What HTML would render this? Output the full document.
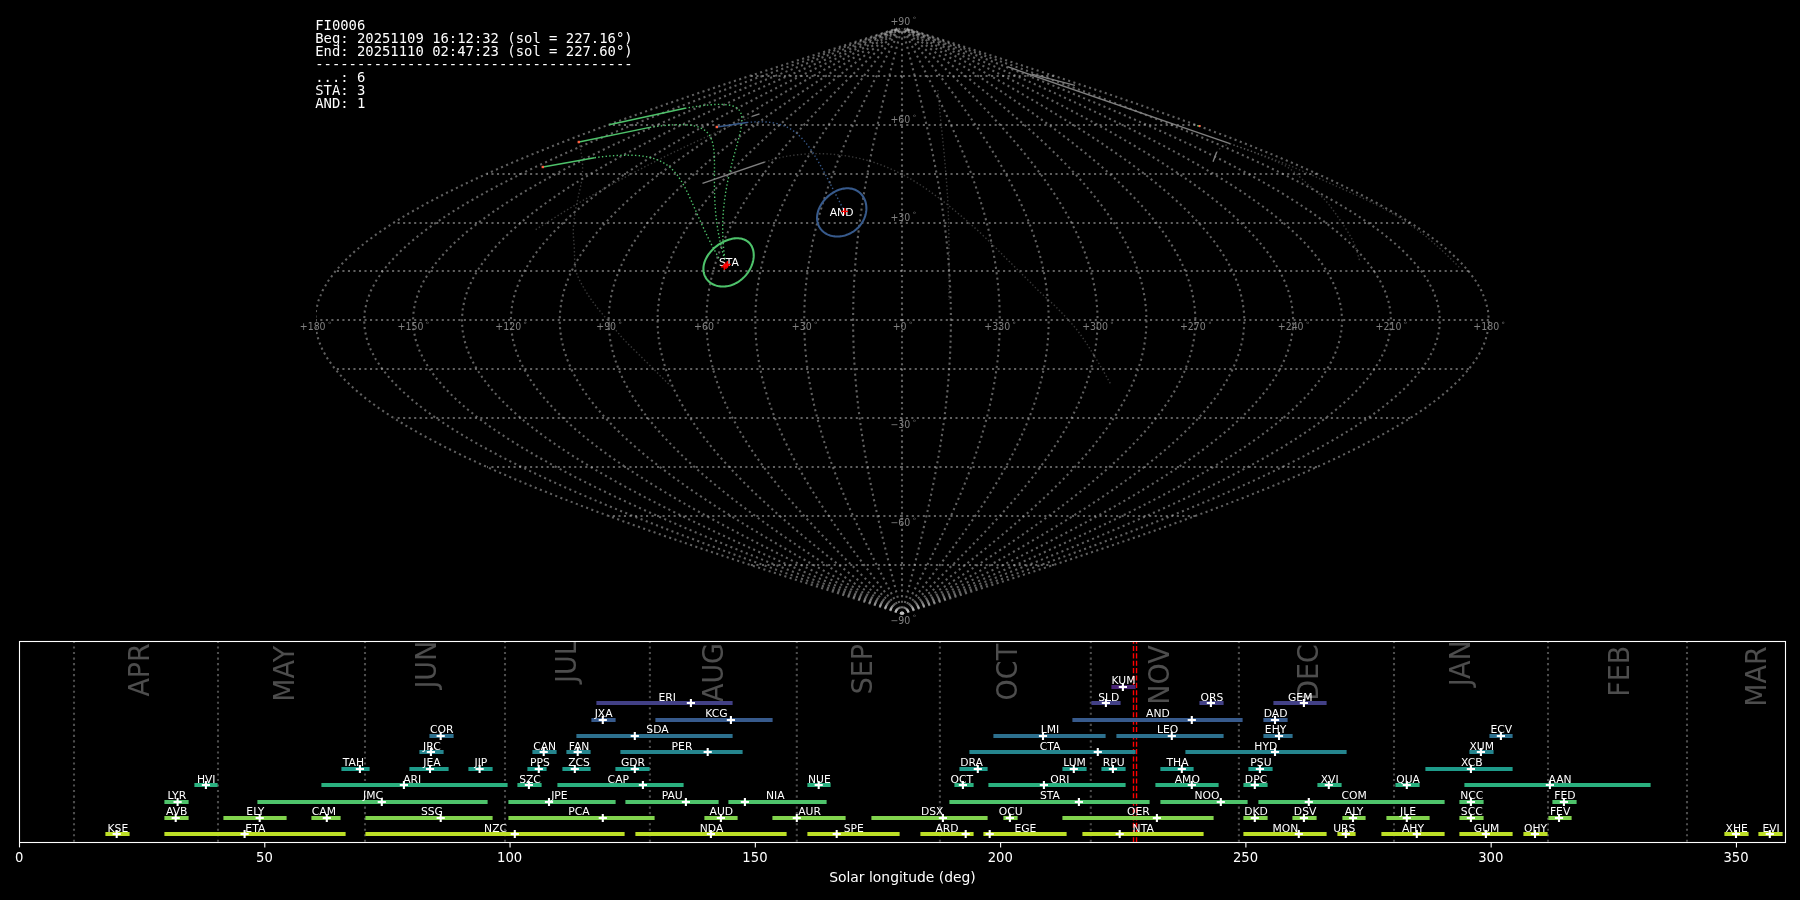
<!DOCTYPE html>
<html lang="en"><head><meta charset="utf-8"><title>FI0006 shower association</title>
<style>
html,body{margin:0;padding:0;background:#000;}
body{width:1800px;height:900px;overflow:hidden;}
svg{display:block;will-change:transform;}
</style></head><body>
<svg width="1800" height="900" viewBox="0 0 1800 900">
<rect width="1800" height="900" fill="#000000"/>
<clipPath id="skyclip"><rect x="316" y="0" width="1174.5" height="640"/></clipPath>
<g clip-path="url(#skyclip)" fill="none" stroke="#c0c0c0" stroke-opacity="0.5" stroke-width="2.083" stroke-dasharray="2.083 3.437">
<path d="M902.00 613.75 L871.29 603.97 L840.66 594.19 L810.20 584.41 L780.00 574.63 L750.12 564.85 L720.67 555.07 L691.71 545.29 L663.33 535.51 L635.60 525.73 L608.60 515.95 L582.41 506.17 L557.09 496.39 L532.71 486.61 L509.35 476.83 L487.07 467.05 L465.92 457.27 L445.97 447.49 L427.27 437.71 L409.87 427.93 L393.82 418.15 L379.16 408.37 L365.93 398.59 L354.18 388.81 L343.92 379.03 L335.19 369.25 L328.02 359.47 L322.42 349.69 L318.41 339.91 L316.00 330.13 L315.20 320.35 L316.00 310.57 L318.41 300.79 L322.42 291.01 L328.02 281.23 L335.19 271.45 L343.92 261.67 L354.18 251.89 L365.93 242.11 L379.16 232.33 L393.82 222.55 L409.87 212.77 L427.27 202.99 L445.97 193.21 L465.92 183.43 L487.07 173.65 L509.35 163.87 L532.71 154.09 L557.09 144.31 L582.41 134.53 L608.60 124.75 L635.60 114.97 L663.33 105.19 L691.71 95.41 L720.67 85.63 L750.12 75.85 L780.00 66.07 L810.20 56.29 L840.66 46.51 L871.29 36.73 L896.88 28.58"/>
<path d="M902.00 613.75 L873.85 603.97 L845.77 594.19 L817.85 584.41 L790.16 574.63 L762.78 564.85 L735.78 555.07 L709.23 545.29 L683.22 535.51 L657.80 525.73 L633.05 515.95 L609.04 506.17 L585.83 496.39 L563.49 486.61 L542.07 476.83 L521.65 467.05 L502.26 457.27 L483.97 447.49 L466.83 437.71 L450.88 427.93 L436.16 418.15 L422.73 408.37 L410.60 398.59 L399.83 388.81 L390.43 379.03 L382.43 369.25 L375.85 359.47 L370.72 349.69 L367.05 339.91 L364.84 330.13 L364.10 320.35 L364.84 310.57 L367.05 300.79 L370.72 291.01 L375.85 281.23 L382.43 271.45 L390.43 261.67 L399.83 251.89 L410.60 242.11 L422.73 232.33 L436.16 222.55 L450.88 212.77 L466.83 202.99 L483.97 193.21 L502.26 183.43 L521.65 173.65 L542.07 163.87 L563.49 154.09 L585.83 144.31 L609.04 134.53 L633.05 124.75 L657.80 114.97 L683.22 105.19 L709.23 95.41 L735.78 85.63 L762.78 75.85 L790.16 66.07 L817.85 56.29 L845.77 46.51 L873.85 36.73 L897.31 28.58"/>
<path d="M902.00 613.75 L876.41 603.97 L850.89 594.19 L825.50 584.41 L800.33 574.63 L775.44 564.85 L750.89 555.07 L726.76 545.29 L703.11 535.51 L680.00 525.73 L657.50 515.95 L635.67 506.17 L614.57 496.39 L594.26 486.61 L574.80 476.83 L556.22 467.05 L538.60 457.27 L521.98 447.49 L506.39 437.71 L491.89 427.93 L478.51 418.15 L466.30 408.37 L455.28 398.59 L445.48 388.81 L436.93 379.03 L429.66 369.25 L423.69 359.47 L419.02 349.69 L415.68 339.91 L413.67 330.13 L413.00 320.35 L413.67 310.57 L415.68 300.79 L419.02 291.01 L423.69 281.23 L429.66 271.45 L436.93 261.67 L445.48 251.89 L455.28 242.11 L466.30 232.33 L478.51 222.55 L491.89 212.77 L506.39 202.99 L521.98 193.21 L538.60 183.43 L556.22 173.65 L574.80 163.87 L594.26 154.09 L614.57 144.31 L635.67 134.53 L657.50 124.75 L680.00 114.97 L703.11 105.19 L726.76 95.41 L750.89 85.63 L775.44 75.85 L800.33 66.07 L825.50 56.29 L850.89 46.51 L876.41 36.73 L897.73 28.58"/>
<path d="M902.00 613.75 L878.97 603.97 L856.00 594.19 L833.15 584.41 L810.50 574.63 L788.09 564.85 L766.00 555.07 L744.28 545.29 L723.00 535.51 L702.20 525.73 L681.95 515.95 L662.30 506.17 L643.32 496.39 L625.04 486.61 L607.52 476.83 L590.80 467.05 L574.94 457.27 L559.98 447.49 L545.95 437.71 L532.90 427.93 L520.86 418.15 L509.87 408.37 L499.95 398.59 L491.13 388.81 L483.44 379.03 L476.90 369.25 L471.52 359.47 L467.32 349.69 L464.31 339.91 L462.50 330.13 L461.90 320.35 L462.50 310.57 L464.31 300.79 L467.32 291.01 L471.52 281.23 L476.90 271.45 L483.44 261.67 L491.13 251.89 L499.95 242.11 L509.87 232.33 L520.86 222.55 L532.90 212.77 L545.95 202.99 L559.98 193.21 L574.94 183.43 L590.80 173.65 L607.52 163.87 L625.04 154.09 L643.32 144.31 L662.30 134.53 L681.95 124.75 L702.20 114.97 L723.00 105.19 L744.28 95.41 L766.00 85.63 L788.09 75.85 L810.50 66.07 L833.15 56.29 L856.00 46.51 L878.97 36.73 L898.16 28.58"/>
<path d="M902.00 613.75 L881.53 603.97 L861.11 594.19 L840.80 584.41 L820.66 574.63 L800.75 564.85 L781.11 555.07 L761.81 545.29 L742.88 535.51 L724.40 525.73 L706.40 515.95 L688.94 506.17 L672.06 496.39 L655.81 486.61 L640.24 476.83 L625.38 467.05 L611.28 457.27 L597.98 447.49 L585.51 437.71 L573.91 427.93 L563.21 418.15 L553.44 408.37 L544.62 398.59 L536.78 388.81 L529.95 379.03 L524.13 369.25 L519.35 359.47 L515.62 349.69 L512.94 339.91 L511.34 330.13 L510.80 320.35 L511.34 310.57 L512.94 300.79 L515.62 291.01 L519.35 281.23 L524.13 271.45 L529.95 261.67 L536.78 251.89 L544.62 242.11 L553.44 232.33 L563.21 222.55 L573.91 212.77 L585.51 202.99 L597.98 193.21 L611.28 183.43 L625.38 173.65 L640.24 163.87 L655.81 154.09 L672.06 144.31 L688.94 134.53 L706.40 124.75 L724.40 114.97 L742.88 105.19 L761.81 95.41 L781.11 85.63 L800.75 75.85 L820.66 66.07 L840.80 56.29 L861.11 46.51 L881.53 36.73 L898.59 28.58"/>
<path d="M902.00 613.75 L884.09 603.97 L866.22 594.19 L848.45 584.41 L830.83 574.63 L813.41 564.85 L796.22 555.07 L779.33 545.29 L762.77 535.51 L746.60 525.73 L730.85 515.95 L715.57 506.17 L700.80 496.39 L686.58 486.61 L672.96 476.83 L659.96 467.05 L647.62 457.27 L635.98 447.49 L625.07 437.71 L614.92 427.93 L605.56 418.15 L597.01 408.37 L589.29 398.59 L582.44 388.81 L576.45 379.03 L571.36 369.25 L567.18 359.47 L563.91 349.69 L561.58 339.91 L560.17 330.13 L559.70 320.35 L560.17 310.57 L561.58 300.79 L563.91 291.01 L567.18 281.23 L571.36 271.45 L576.45 261.67 L582.44 251.89 L589.29 242.11 L597.01 232.33 L605.56 222.55 L614.92 212.77 L625.07 202.99 L635.98 193.21 L647.62 183.43 L659.96 173.65 L672.96 163.87 L686.58 154.09 L700.80 144.31 L715.57 134.53 L730.85 124.75 L746.60 114.97 L762.77 105.19 L779.33 95.41 L796.22 85.63 L813.41 75.85 L830.83 66.07 L848.45 56.29 L866.22 46.51 L884.09 36.73 L899.01 28.58"/>
<path d="M902.00 613.75 L886.64 603.97 L871.33 594.19 L856.10 584.41 L841.00 574.63 L826.06 564.85 L811.33 555.07 L796.85 545.29 L782.66 535.51 L768.80 525.73 L755.30 515.95 L742.20 506.17 L729.54 496.39 L717.36 486.61 L705.68 476.83 L694.53 467.05 L683.96 457.27 L673.99 447.49 L664.63 437.71 L655.93 427.93 L647.91 418.15 L640.58 408.37 L633.97 398.59 L628.09 388.81 L622.96 379.03 L618.60 369.25 L615.01 359.47 L612.21 349.69 L610.21 339.91 L609.00 330.13 L608.60 320.35 L609.00 310.57 L610.21 300.79 L612.21 291.01 L615.01 281.23 L618.60 271.45 L622.96 261.67 L628.09 251.89 L633.97 242.11 L640.58 232.33 L647.91 222.55 L655.93 212.77 L664.63 202.99 L673.99 193.21 L683.96 183.43 L694.53 173.65 L705.68 163.87 L717.36 154.09 L729.54 144.31 L742.20 134.53 L755.30 124.75 L768.80 114.97 L782.66 105.19 L796.85 95.41 L811.33 85.63 L826.06 75.85 L841.00 66.07 L856.10 56.29 L871.33 46.51 L886.64 36.73 L899.44 28.58"/>
<path d="M902.00 613.75 L889.20 603.97 L876.44 594.19 L863.75 584.41 L851.17 574.63 L838.72 564.85 L826.45 555.07 L814.38 545.29 L802.55 535.51 L791.00 525.73 L779.75 515.95 L768.84 506.17 L758.29 496.39 L748.13 486.61 L738.40 476.83 L729.11 467.05 L720.30 457.27 L711.99 447.49 L704.20 437.71 L696.95 427.93 L690.26 418.15 L684.15 408.37 L678.64 398.59 L673.74 388.81 L669.47 379.03 L665.83 369.25 L662.84 359.47 L660.51 349.69 L658.84 339.91 L657.84 330.13 L657.50 320.35 L657.84 310.57 L658.84 300.79 L660.51 291.01 L662.84 281.23 L665.83 271.45 L669.47 261.67 L673.74 251.89 L678.64 242.11 L684.15 232.33 L690.26 222.55 L696.95 212.77 L704.20 202.99 L711.99 193.21 L720.30 183.43 L729.11 173.65 L738.40 163.87 L748.13 154.09 L758.29 144.31 L768.84 134.53 L779.75 124.75 L791.00 114.97 L802.55 105.19 L814.38 95.41 L826.45 85.63 L838.72 75.85 L851.17 66.07 L863.75 56.29 L876.44 46.51 L889.20 36.73 L899.87 28.58"/>
<path d="M902.00 613.75 L891.76 603.97 L881.55 594.19 L871.40 584.41 L861.33 574.63 L851.37 564.85 L841.56 555.07 L831.90 545.29 L822.44 535.51 L813.20 525.73 L804.20 515.95 L795.47 506.17 L787.03 496.39 L778.90 486.61 L771.12 476.83 L763.69 467.05 L756.64 457.27 L749.99 447.49 L743.76 437.71 L737.96 427.93 L732.61 418.15 L727.72 408.37 L723.31 398.59 L719.39 388.81 L715.97 379.03 L713.06 369.25 L710.67 359.47 L708.81 349.69 L707.47 339.91 L706.67 330.13 L706.40 320.35 L706.67 310.57 L707.47 300.79 L708.81 291.01 L710.67 281.23 L713.06 271.45 L715.97 261.67 L719.39 251.89 L723.31 242.11 L727.72 232.33 L732.61 222.55 L737.96 212.77 L743.76 202.99 L749.99 193.21 L756.64 183.43 L763.69 173.65 L771.12 163.87 L778.90 154.09 L787.03 144.31 L795.47 134.53 L804.20 124.75 L813.20 114.97 L822.44 105.19 L831.90 95.41 L841.56 85.63 L851.37 75.85 L861.33 66.07 L871.40 56.29 L881.55 46.51 L891.76 36.73 L900.29 28.58"/>
<path d="M902.00 613.75 L894.32 603.97 L886.67 594.19 L879.05 584.41 L871.50 574.63 L864.03 564.85 L856.67 555.07 L849.43 545.29 L842.33 535.51 L835.40 525.73 L828.65 515.95 L822.10 506.17 L815.77 496.39 L809.68 486.61 L803.84 476.83 L798.27 467.05 L792.98 457.27 L787.99 447.49 L783.32 437.71 L778.97 427.93 L774.95 418.15 L771.29 408.37 L767.98 398.59 L765.04 388.81 L762.48 379.03 L760.30 369.25 L758.51 359.47 L757.11 349.69 L756.10 339.91 L755.50 330.13 L755.30 320.35 L755.50 310.57 L756.10 300.79 L757.11 291.01 L758.51 281.23 L760.30 271.45 L762.48 261.67 L765.04 251.89 L767.98 242.11 L771.29 232.33 L774.95 222.55 L778.97 212.77 L783.32 202.99 L787.99 193.21 L792.98 183.43 L798.27 173.65 L803.84 163.87 L809.68 154.09 L815.77 144.31 L822.10 134.53 L828.65 124.75 L835.40 114.97 L842.33 105.19 L849.43 95.41 L856.67 85.63 L864.03 75.85 L871.50 66.07 L879.05 56.29 L886.67 46.51 L894.32 36.73 L900.72 28.58"/>
<path d="M902.00 613.75 L896.88 603.97 L891.78 594.19 L886.70 584.41 L881.67 574.63 L876.69 564.85 L871.78 555.07 L866.95 545.29 L862.22 535.51 L857.60 525.73 L853.10 515.95 L848.73 506.17 L844.51 496.39 L840.45 486.61 L836.56 476.83 L832.84 467.05 L829.32 457.27 L826.00 447.49 L822.88 437.71 L819.98 427.93 L817.30 418.15 L814.86 408.37 L812.66 398.59 L810.70 388.81 L808.99 379.03 L807.53 369.25 L806.34 359.47 L805.40 349.69 L804.74 339.91 L804.33 330.13 L804.20 320.35 L804.33 310.57 L804.74 300.79 L805.40 291.01 L806.34 281.23 L807.53 271.45 L808.99 261.67 L810.70 251.89 L812.66 242.11 L814.86 232.33 L817.30 222.55 L819.98 212.77 L822.88 202.99 L826.00 193.21 L829.32 183.43 L832.84 173.65 L836.56 163.87 L840.45 154.09 L844.51 144.31 L848.73 134.53 L853.10 124.75 L857.60 114.97 L862.22 105.19 L866.95 95.41 L871.78 85.63 L876.69 75.85 L881.67 66.07 L886.70 56.29 L891.78 46.51 L896.88 36.73 L901.15 28.58"/>
<path d="M902.00 613.75 L899.44 603.97 L896.89 594.19 L894.35 584.41 L891.83 574.63 L889.34 564.85 L886.89 555.07 L884.48 545.29 L882.11 535.51 L879.80 525.73 L877.55 515.95 L875.37 506.17 L873.26 496.39 L871.23 486.61 L869.28 476.83 L867.42 467.05 L865.66 457.27 L864.00 447.49 L862.44 437.71 L860.99 427.93 L859.65 418.15 L858.43 408.37 L857.33 398.59 L856.35 388.81 L855.49 379.03 L854.77 369.25 L854.17 359.47 L853.70 349.69 L853.37 339.91 L853.17 330.13 L853.10 320.35 L853.17 310.57 L853.37 300.79 L853.70 291.01 L854.17 281.23 L854.77 271.45 L855.49 261.67 L856.35 251.89 L857.33 242.11 L858.43 232.33 L859.65 222.55 L860.99 212.77 L862.44 202.99 L864.00 193.21 L865.66 183.43 L867.42 173.65 L869.28 163.87 L871.23 154.09 L873.26 144.31 L875.37 134.53 L877.55 124.75 L879.80 114.97 L882.11 105.19 L884.48 95.41 L886.89 85.63 L889.34 75.85 L891.83 66.07 L894.35 56.29 L896.89 46.51 L899.44 36.73 L901.57 28.58"/>
<path d="M902.00 613.75 L902.00 603.97 L902.00 594.19 L902.00 584.41 L902.00 574.63 L902.00 564.85 L902.00 555.07 L902.00 545.29 L902.00 535.51 L902.00 525.73 L902.00 515.95 L902.00 506.17 L902.00 496.39 L902.00 486.61 L902.00 476.83 L902.00 467.05 L902.00 457.27 L902.00 447.49 L902.00 437.71 L902.00 427.93 L902.00 418.15 L902.00 408.37 L902.00 398.59 L902.00 388.81 L902.00 379.03 L902.00 369.25 L902.00 359.47 L902.00 349.69 L902.00 339.91 L902.00 330.13 L902.00 320.35 L902.00 310.57 L902.00 300.79 L902.00 291.01 L902.00 281.23 L902.00 271.45 L902.00 261.67 L902.00 251.89 L902.00 242.11 L902.00 232.33 L902.00 222.55 L902.00 212.77 L902.00 202.99 L902.00 193.21 L902.00 183.43 L902.00 173.65 L902.00 163.87 L902.00 154.09 L902.00 144.31 L902.00 134.53 L902.00 124.75 L902.00 114.97 L902.00 105.19 L902.00 95.41 L902.00 85.63 L902.00 75.85 L902.00 66.07 L902.00 56.29 L902.00 46.51 L902.00 36.73 L902.00 28.58"/>
<path d="M902.00 613.75 L904.56 603.97 L907.11 594.19 L909.65 584.41 L912.17 574.63 L914.66 564.85 L917.11 555.07 L919.52 545.29 L921.89 535.51 L924.20 525.73 L926.45 515.95 L928.63 506.17 L930.74 496.39 L932.77 486.61 L934.72 476.83 L936.58 467.05 L938.34 457.27 L940.00 447.49 L941.56 437.71 L943.01 427.93 L944.35 418.15 L945.57 408.37 L946.67 398.59 L947.65 388.81 L948.51 379.03 L949.23 369.25 L949.83 359.47 L950.30 349.69 L950.63 339.91 L950.83 330.13 L950.90 320.35 L950.83 310.57 L950.63 300.79 L950.30 291.01 L949.83 281.23 L949.23 271.45 L948.51 261.67 L947.65 251.89 L946.67 242.11 L945.57 232.33 L944.35 222.55 L943.01 212.77 L941.56 202.99 L940.00 193.21 L938.34 183.43 L936.58 173.65 L934.72 163.87 L932.77 154.09 L930.74 144.31 L928.63 134.53 L926.45 124.75 L924.20 114.97 L921.89 105.19 L919.52 95.41 L917.11 85.63 L914.66 75.85 L912.17 66.07 L909.65 56.29 L907.11 46.51 L904.56 36.73 L902.43 28.58"/>
<path d="M902.00 613.75 L907.12 603.97 L912.22 594.19 L917.30 584.41 L922.33 574.63 L927.31 564.85 L932.22 555.07 L937.05 545.29 L941.78 535.51 L946.40 525.73 L950.90 515.95 L955.27 506.17 L959.49 496.39 L963.55 486.61 L967.44 476.83 L971.16 467.05 L974.68 457.27 L978.00 447.49 L981.12 437.71 L984.02 427.93 L986.70 418.15 L989.14 408.37 L991.34 398.59 L993.30 388.81 L995.01 379.03 L996.47 369.25 L997.66 359.47 L998.60 349.69 L999.26 339.91 L999.67 330.13 L999.80 320.35 L999.67 310.57 L999.26 300.79 L998.60 291.01 L997.66 281.23 L996.47 271.45 L995.01 261.67 L993.30 251.89 L991.34 242.11 L989.14 232.33 L986.70 222.55 L984.02 212.77 L981.12 202.99 L978.00 193.21 L974.68 183.43 L971.16 173.65 L967.44 163.87 L963.55 154.09 L959.49 144.31 L955.27 134.53 L950.90 124.75 L946.40 114.97 L941.78 105.19 L937.05 95.41 L932.22 85.63 L927.31 75.85 L922.33 66.07 L917.30 56.29 L912.22 46.51 L907.12 36.73 L902.85 28.58"/>
<path d="M902.00 613.75 L909.68 603.97 L917.33 594.19 L924.95 584.41 L932.50 574.63 L939.97 564.85 L947.33 555.07 L954.57 545.29 L961.67 535.51 L968.60 525.73 L975.35 515.95 L981.90 506.17 L988.23 496.39 L994.32 486.61 L1000.16 476.83 L1005.73 467.05 L1011.02 457.27 L1016.01 447.49 L1020.68 437.71 L1025.03 427.93 L1029.05 418.15 L1032.71 408.37 L1036.02 398.59 L1038.96 388.81 L1041.52 379.03 L1043.70 369.25 L1045.49 359.47 L1046.89 349.69 L1047.90 339.91 L1048.50 330.13 L1048.70 320.35 L1048.50 310.57 L1047.90 300.79 L1046.89 291.01 L1045.49 281.23 L1043.70 271.45 L1041.52 261.67 L1038.96 251.89 L1036.02 242.11 L1032.71 232.33 L1029.05 222.55 L1025.03 212.77 L1020.68 202.99 L1016.01 193.21 L1011.02 183.43 L1005.73 173.65 L1000.16 163.87 L994.32 154.09 L988.23 144.31 L981.90 134.53 L975.35 124.75 L968.60 114.97 L961.67 105.19 L954.57 95.41 L947.33 85.63 L939.97 75.85 L932.50 66.07 L924.95 56.29 L917.33 46.51 L909.68 36.73 L903.28 28.58"/>
<path d="M902.00 613.75 L912.24 603.97 L922.45 594.19 L932.60 584.41 L942.67 574.63 L952.63 564.85 L962.44 555.07 L972.10 545.29 L981.56 535.51 L990.80 525.73 L999.80 515.95 L1008.53 506.17 L1016.97 496.39 L1025.10 486.61 L1032.88 476.83 L1040.31 467.05 L1047.36 457.27 L1054.01 447.49 L1060.24 437.71 L1066.04 427.93 L1071.39 418.15 L1076.28 408.37 L1080.69 398.59 L1084.61 388.81 L1088.03 379.03 L1090.94 369.25 L1093.33 359.47 L1095.19 349.69 L1096.53 339.91 L1097.33 330.13 L1097.60 320.35 L1097.33 310.57 L1096.53 300.79 L1095.19 291.01 L1093.33 281.23 L1090.94 271.45 L1088.03 261.67 L1084.61 251.89 L1080.69 242.11 L1076.28 232.33 L1071.39 222.55 L1066.04 212.77 L1060.24 202.99 L1054.01 193.21 L1047.36 183.43 L1040.31 173.65 L1032.88 163.87 L1025.10 154.09 L1016.97 144.31 L1008.53 134.53 L999.80 124.75 L990.80 114.97 L981.56 105.19 L972.10 95.41 L962.44 85.63 L952.63 75.85 L942.67 66.07 L932.60 56.29 L922.45 46.51 L912.24 36.73 L903.71 28.58"/>
<path d="M902.00 613.75 L914.80 603.97 L927.56 594.19 L940.25 584.41 L952.83 574.63 L965.28 564.85 L977.55 555.07 L989.62 545.29 L1001.45 535.51 L1013.00 525.73 L1024.25 515.95 L1035.16 506.17 L1045.71 496.39 L1055.87 486.61 L1065.60 476.83 L1074.89 467.05 L1083.70 457.27 L1092.01 447.49 L1099.80 437.71 L1107.05 427.93 L1113.74 418.15 L1119.85 408.37 L1125.36 398.59 L1130.26 388.81 L1134.53 379.03 L1138.17 369.25 L1141.16 359.47 L1143.49 349.69 L1145.16 339.91 L1146.16 330.13 L1146.50 320.35 L1146.16 310.57 L1145.16 300.79 L1143.49 291.01 L1141.16 281.23 L1138.17 271.45 L1134.53 261.67 L1130.26 251.89 L1125.36 242.11 L1119.85 232.33 L1113.74 222.55 L1107.05 212.77 L1099.80 202.99 L1092.01 193.21 L1083.70 183.43 L1074.89 173.65 L1065.60 163.87 L1055.87 154.09 L1045.71 144.31 L1035.16 134.53 L1024.25 124.75 L1013.00 114.97 L1001.45 105.19 L989.62 95.41 L977.55 85.63 L965.28 75.85 L952.83 66.07 L940.25 56.29 L927.56 46.51 L914.80 36.73 L904.13 28.58"/>
<path d="M902.00 613.75 L917.36 603.97 L932.67 594.19 L947.90 584.41 L963.00 574.63 L977.94 564.85 L992.67 555.07 L1007.15 545.29 L1021.34 535.51 L1035.20 525.73 L1048.70 515.95 L1061.80 506.17 L1074.46 496.39 L1086.64 486.61 L1098.32 476.83 L1109.47 467.05 L1120.04 457.27 L1130.01 447.49 L1139.37 437.71 L1148.07 427.93 L1156.09 418.15 L1163.42 408.37 L1170.03 398.59 L1175.91 388.81 L1181.04 379.03 L1185.40 369.25 L1188.99 359.47 L1191.79 349.69 L1193.79 339.91 L1195.00 330.13 L1195.40 320.35 L1195.00 310.57 L1193.79 300.79 L1191.79 291.01 L1188.99 281.23 L1185.40 271.45 L1181.04 261.67 L1175.91 251.89 L1170.03 242.11 L1163.42 232.33 L1156.09 222.55 L1148.07 212.77 L1139.37 202.99 L1130.01 193.21 L1120.04 183.43 L1109.47 173.65 L1098.32 163.87 L1086.64 154.09 L1074.46 144.31 L1061.80 134.53 L1048.70 124.75 L1035.20 114.97 L1021.34 105.19 L1007.15 95.41 L992.67 85.63 L977.94 75.85 L963.00 66.07 L947.90 56.29 L932.67 46.51 L917.36 36.73 L904.56 28.58"/>
<path d="M902.00 613.75 L919.91 603.97 L937.78 594.19 L955.55 584.41 L973.17 574.63 L990.59 564.85 L1007.78 555.07 L1024.67 545.29 L1041.23 535.51 L1057.40 525.73 L1073.15 515.95 L1088.43 506.17 L1103.20 496.39 L1117.42 486.61 L1131.04 476.83 L1144.04 467.05 L1156.38 457.27 L1168.02 447.49 L1178.93 437.71 L1189.08 427.93 L1198.44 418.15 L1206.99 408.37 L1214.71 398.59 L1221.56 388.81 L1227.55 379.03 L1232.64 369.25 L1236.82 359.47 L1240.09 349.69 L1242.42 339.91 L1243.83 330.13 L1244.30 320.35 L1243.83 310.57 L1242.42 300.79 L1240.09 291.01 L1236.82 281.23 L1232.64 271.45 L1227.55 261.67 L1221.56 251.89 L1214.71 242.11 L1206.99 232.33 L1198.44 222.55 L1189.08 212.77 L1178.93 202.99 L1168.02 193.21 L1156.38 183.43 L1144.04 173.65 L1131.04 163.87 L1117.42 154.09 L1103.20 144.31 L1088.43 134.53 L1073.15 124.75 L1057.40 114.97 L1041.23 105.19 L1024.67 95.41 L1007.78 85.63 L990.59 75.85 L973.17 66.07 L955.55 56.29 L937.78 46.51 L919.91 36.73 L904.99 28.58"/>
<path d="M902.00 613.75 L922.47 603.97 L942.89 594.19 L963.20 584.41 L983.34 574.63 L1003.25 564.85 L1022.89 555.07 L1042.19 545.29 L1061.12 535.51 L1079.60 525.73 L1097.60 515.95 L1115.06 506.17 L1131.94 496.39 L1148.19 486.61 L1163.76 476.83 L1178.62 467.05 L1192.72 457.27 L1206.02 447.49 L1218.49 437.71 L1230.09 427.93 L1240.79 418.15 L1250.56 408.37 L1259.38 398.59 L1267.22 388.81 L1274.05 379.03 L1279.87 369.25 L1284.65 359.47 L1288.38 349.69 L1291.06 339.91 L1292.66 330.13 L1293.20 320.35 L1292.66 310.57 L1291.06 300.79 L1288.38 291.01 L1284.65 281.23 L1279.87 271.45 L1274.05 261.67 L1267.22 251.89 L1259.38 242.11 L1250.56 232.33 L1240.79 222.55 L1230.09 212.77 L1218.49 202.99 L1206.02 193.21 L1192.72 183.43 L1178.62 173.65 L1163.76 163.87 L1148.19 154.09 L1131.94 144.31 L1115.06 134.53 L1097.60 124.75 L1079.60 114.97 L1061.12 105.19 L1042.19 95.41 L1022.89 85.63 L1003.25 75.85 L983.34 66.07 L963.20 56.29 L942.89 46.51 L922.47 36.73 L905.41 28.58"/>
<path d="M902.00 613.75 L925.03 603.97 L948.00 594.19 L970.85 584.41 L993.50 574.63 L1015.91 564.85 L1038.00 555.07 L1059.72 545.29 L1081.00 535.51 L1101.80 525.73 L1122.05 515.95 L1141.70 506.17 L1160.68 496.39 L1178.96 486.61 L1196.48 476.83 L1213.20 467.05 L1229.06 457.27 L1244.02 447.49 L1258.05 437.71 L1271.10 427.93 L1283.14 418.15 L1294.13 408.37 L1304.05 398.59 L1312.87 388.81 L1320.56 379.03 L1327.10 369.25 L1332.48 359.47 L1336.68 349.69 L1339.69 339.91 L1341.50 330.13 L1342.10 320.35 L1341.50 310.57 L1339.69 300.79 L1336.68 291.01 L1332.48 281.23 L1327.10 271.45 L1320.56 261.67 L1312.87 251.89 L1304.05 242.11 L1294.13 232.33 L1283.14 222.55 L1271.10 212.77 L1258.05 202.99 L1244.02 193.21 L1229.06 183.43 L1213.20 173.65 L1196.48 163.87 L1178.96 154.09 L1160.68 144.31 L1141.70 134.53 L1122.05 124.75 L1101.80 114.97 L1081.00 105.19 L1059.72 95.41 L1038.00 85.63 L1015.91 75.85 L993.50 66.07 L970.85 56.29 L948.00 46.51 L925.03 36.73 L905.84 28.58"/>
<path d="M902.00 613.75 L927.59 603.97 L953.11 594.19 L978.50 584.41 L1003.67 574.63 L1028.56 564.85 L1053.11 555.07 L1077.24 545.29 L1100.89 535.51 L1124.00 525.73 L1146.50 515.95 L1168.33 506.17 L1189.43 496.39 L1209.74 486.61 L1229.20 476.83 L1247.78 467.05 L1265.40 457.27 L1282.02 447.49 L1297.61 437.71 L1312.11 427.93 L1325.49 418.15 L1337.70 408.37 L1348.72 398.59 L1358.52 388.81 L1367.07 379.03 L1374.34 369.25 L1380.31 359.47 L1384.98 349.69 L1388.32 339.91 L1390.33 330.13 L1391.00 320.35 L1390.33 310.57 L1388.32 300.79 L1384.98 291.01 L1380.31 281.23 L1374.34 271.45 L1367.07 261.67 L1358.52 251.89 L1348.72 242.11 L1337.70 232.33 L1325.49 222.55 L1312.11 212.77 L1297.61 202.99 L1282.02 193.21 L1265.40 183.43 L1247.78 173.65 L1229.20 163.87 L1209.74 154.09 L1189.43 144.31 L1168.33 134.53 L1146.50 124.75 L1124.00 114.97 L1100.89 105.19 L1077.24 95.41 L1053.11 85.63 L1028.56 75.85 L1003.67 66.07 L978.50 56.29 L953.11 46.51 L927.59 36.73 L906.27 28.58"/>
<path d="M902.00 613.75 L930.15 603.97 L958.23 594.19 L986.15 584.41 L1013.84 574.63 L1041.22 564.85 L1068.22 555.07 L1094.77 545.29 L1120.78 535.51 L1146.20 525.73 L1170.95 515.95 L1194.96 506.17 L1218.17 496.39 L1240.51 486.61 L1261.93 476.83 L1282.35 467.05 L1301.74 457.27 L1320.03 447.49 L1337.17 437.71 L1353.12 427.93 L1367.84 418.15 L1381.27 408.37 L1393.40 398.59 L1404.17 388.81 L1413.57 379.03 L1421.57 369.25 L1428.15 359.47 L1433.28 349.69 L1436.95 339.91 L1439.16 330.13 L1439.90 320.35 L1439.16 310.57 L1436.95 300.79 L1433.28 291.01 L1428.15 281.23 L1421.57 271.45 L1413.57 261.67 L1404.17 251.89 L1393.40 242.11 L1381.27 232.33 L1367.84 222.55 L1353.12 212.77 L1337.17 202.99 L1320.03 193.21 L1301.74 183.43 L1282.35 173.65 L1261.93 163.87 L1240.51 154.09 L1218.17 144.31 L1194.96 134.53 L1170.95 124.75 L1146.20 114.97 L1120.78 105.19 L1094.77 95.41 L1068.22 85.63 L1041.22 75.85 L1013.84 66.07 L986.15 56.29 L958.23 46.51 L930.15 36.73 L906.69 28.58"/>
<path d="M902.00 613.75 L932.71 603.97 L963.34 594.19 L993.80 584.41 L1024.00 574.63 L1053.88 564.85 L1083.33 555.07 L1112.29 545.29 L1140.67 535.51 L1168.40 525.73 L1195.40 515.95 L1221.59 506.17 L1246.91 496.39 L1271.29 486.61 L1294.65 476.83 L1316.93 467.05 L1338.08 457.27 L1358.03 447.49 L1376.73 437.71 L1394.13 427.93 L1410.18 418.15 L1424.84 408.37 L1438.07 398.59 L1449.82 388.81 L1460.08 379.03 L1468.81 369.25 L1475.98 359.47 L1481.58 349.69 L1485.59 339.91 L1488.00 330.13 L1488.80 320.35 L1488.00 310.57 L1485.59 300.79 L1481.58 291.01 L1475.98 281.23 L1468.81 271.45 L1460.08 261.67 L1449.82 251.89 L1438.07 242.11 L1424.84 232.33 L1410.18 222.55 L1394.13 212.77 L1376.73 202.99 L1358.03 193.21 L1338.08 183.43 L1316.93 173.65 L1294.65 163.87 L1271.29 154.09 L1246.91 144.31 L1221.59 134.53 L1195.40 124.75 L1168.40 114.97 L1140.67 105.19 L1112.29 95.41 L1083.33 85.63 L1053.88 75.85 L1024.00 66.07 L993.80 56.29 L963.34 46.51 L932.71 36.73 L907.12 28.58"/>
<path d="M902.00 565.00 L750.12 565.00 M1053.88 565.00 L902.00 565.00"/>
<path d="M902.00 516.00 L608.60 516.00 M1195.40 516.00 L902.00 516.00"/>
<path d="M902.00 467.00 L487.07 467.00 M1316.93 467.00 L902.00 467.00"/>
<path d="M902.00 418.00 L393.82 418.00 M1410.18 418.00 L902.00 418.00"/>
<path d="M902.00 369.00 L335.19 369.00 M1468.81 369.00 L902.00 369.00"/>
<path d="M902.00 320.00 L315.20 320.00 M1488.80 320.00 L902.00 320.00"/>
<path d="M902.00 271.00 L335.19 271.00 M1468.81 271.00 L902.00 271.00"/>
<path d="M902.00 223.00 L393.82 223.00 M1410.18 223.00 L902.00 223.00"/>
<path d="M902.00 174.00 L487.07 174.00 M1316.93 174.00 L902.00 174.00"/>
<path d="M902.00 125.00 L608.60 125.00 M1195.40 125.00 L902.00 125.00"/>
<path d="M902.00 76.00 L750.12 76.00 M1053.88 76.00 L902.00 76.00"/>
</g>
<g font-family="'DejaVu Sans','Liberation Sans',sans-serif" font-size="9.72" fill="#808080">
<text transform="translate(1473.35 330.35) scale(0.97 1)">+180<tspan dx="1.9" dy="-5.4" font-size="7.2">∘</tspan></text>
<text transform="translate(1375.55 330.35) scale(0.97 1)">+210<tspan dx="1.9" dy="-5.4" font-size="7.2">∘</tspan></text>
<text transform="translate(1277.75 330.35) scale(0.97 1)">+240<tspan dx="1.9" dy="-5.4" font-size="7.2">∘</tspan></text>
<text transform="translate(1179.95 330.35) scale(0.97 1)">+270<tspan dx="1.9" dy="-5.4" font-size="7.2">∘</tspan></text>
<text transform="translate(1082.15 330.35) scale(0.97 1)">+300<tspan dx="1.9" dy="-5.4" font-size="7.2">∘</tspan></text>
<text transform="translate(984.35 330.35) scale(0.97 1)">+330<tspan dx="1.9" dy="-5.4" font-size="7.2">∘</tspan></text>
<text transform="translate(892.73 330.35) scale(0.97 1)">+0<tspan dx="1.9" dy="-5.4" font-size="7.2">∘</tspan></text>
<text transform="translate(791.84 330.35) scale(0.97 1)">+30<tspan dx="1.9" dy="-5.4" font-size="7.2">∘</tspan></text>
<text transform="translate(694.04 330.35) scale(0.97 1)">+60<tspan dx="1.9" dy="-5.4" font-size="7.2">∘</tspan></text>
<text transform="translate(596.24 330.35) scale(0.97 1)">+90<tspan dx="1.9" dy="-5.4" font-size="7.2">∘</tspan></text>
<text transform="translate(495.35 330.35) scale(0.97 1)">+120<tspan dx="1.9" dy="-5.4" font-size="7.2">∘</tspan></text>
<text transform="translate(397.55 330.35) scale(0.97 1)">+150<tspan dx="1.9" dy="-5.4" font-size="7.2">∘</tspan></text>
<text transform="translate(299.75 330.35) scale(0.97 1)">+180<tspan dx="1.9" dy="-5.4" font-size="7.2">∘</tspan></text>
<text transform="translate(890.44 220.75) scale(0.97 1)">+30<tspan dx="1.9" dy="-5.4" font-size="7.2">∘</tspan></text>
<text transform="translate(890.44 122.95) scale(0.97 1)">+60<tspan dx="1.9" dy="-5.4" font-size="7.2">∘</tspan></text>
<text transform="translate(890.44 25.15) scale(0.97 1)">+90<tspan dx="1.9" dy="-5.4" font-size="7.2">∘</tspan></text>
<text transform="translate(890.44 428.15) scale(0.97 1)">−30<tspan dx="1.9" dy="-5.4" font-size="7.2">∘</tspan></text>
<text transform="translate(890.44 525.95) scale(0.97 1)">−60<tspan dx="1.9" dy="-5.4" font-size="7.2">∘</tspan></text>
<text transform="translate(890.44 623.75) scale(0.97 1)">−90<tspan dx="1.9" dy="-5.4" font-size="7.2">∘</tspan></text>
</g>
<g font-family="'DejaVu Sans Mono','Liberation Mono',monospace" font-size="13.89" fill="#ffffff" style="white-space:pre">
<text x="315.20" y="29.71">FI0006</text>
<text x="315.20" y="42.75">Beg: 20251109 16:12:32 (sol = 227.16°)</text>
<text x="315.20" y="55.79">End: 20251110 02:47:23 (sol = 227.60°)</text>
<text x="315.20" y="68.83">--------------------------------------</text>
<text x="315.20" y="81.87">...: 6</text>
<text x="315.20" y="94.91">STA: 3</text>
<text x="315.20" y="107.95">AND: 1</text>
</g>
<g fill="none" stroke="#808080" stroke-opacity="0.45" stroke-width="1.389" stroke-dasharray="1.389 2.292">
<path d="M578.30 142.00 C578.58 142.78 579.30 143.15 580.00 146.70 C580.70 150.25 582.22 157.75 582.50 163.30 C582.78 168.85 582.40 174.43 581.70 180.00 C581.00 185.57 579.42 191.15 578.30 196.70 C577.18 202.25 575.83 207.75 575.00 213.30 C574.17 218.85 573.43 224.43 573.30 230.00 C573.17 235.57 573.75 239.90 574.20 246.70 C574.65 253.50 574.30 263.77 576.00 270.80 C577.70 277.83 581.13 283.10 584.40 288.90 C587.67 294.70 591.43 300.05 595.60 305.60 C599.77 311.15 604.78 316.65 609.40 322.20 C614.02 327.75 618.20 333.33 623.30 338.90 C628.40 344.47 634.43 350.05 640.00 355.60 C645.57 361.15 651.60 367.13 656.70 372.20 C661.80 377.27 668.28 383.70 670.60 386.00"/>
<path d="M752.00 116.30 C744.45 119.70 721.53 129.83 706.70 136.70 C691.87 143.57 677.45 150.28 663.00 157.50 C648.55 164.72 634.33 172.25 620.00 180.00 C605.67 187.75 591.17 195.67 577.00 204.00 C562.83 212.33 542.00 225.67 535.00 230.00"/>
<path d="M764.70 162.00 C767.98 161.12 777.40 158.03 784.40 156.70 C791.40 155.37 799.28 154.45 806.70 154.00 C814.12 153.55 821.52 153.55 828.90 154.00 C836.28 154.45 843.60 155.33 851.00 156.70 C858.40 158.07 865.87 159.80 873.30 162.20 C880.73 164.60 888.18 167.58 895.60 171.10 C903.02 174.62 910.40 178.67 917.80 183.30 C925.20 187.93 932.63 193.33 940.00 198.90 C947.37 204.47 954.60 210.40 962.00 216.70 C969.40 223.00 976.95 229.67 984.40 236.70 C991.85 243.73 999.28 251.52 1006.70 258.90 C1014.12 266.28 1023.72 275.82 1028.90 281.00 C1034.08 286.18 1032.95 285.33 1037.80 290.00 C1042.65 294.67 1051.33 302.17 1058.00 309.00 C1064.67 315.83 1071.63 323.00 1077.80 331.00 C1083.97 339.00 1089.47 348.08 1095.00 357.00 C1100.53 365.92 1108.33 379.92 1111.00 384.50"/>
<path d="M937.80 90.00 C938.33 95.50 939.90 111.88 941.00 123.00 C942.10 134.12 943.27 143.70 944.40 156.70 C945.53 169.70 947.03 186.18 947.80 201.00 C948.57 215.82 948.80 229.10 949.00 245.60 C949.20 262.10 949.00 290.93 949.00 300.00"/>
<path d="M1230.00 143.70 C1234.67 145.42 1248.55 150.17 1258.00 154.00 C1267.45 157.83 1278.58 161.82 1286.70 166.70 C1294.82 171.58 1300.32 177.75 1306.70 183.30 C1313.08 188.85 1319.45 193.88 1325.00 200.00 C1330.55 206.12 1335.28 213.05 1340.00 220.00 C1344.72 226.95 1349.97 234.70 1353.30 241.70 C1356.63 248.70 1358.88 258.62 1360.00 262.00"/>
<path d="M1230.00 143.70 C1238.33 146.70 1263.33 155.10 1280.00 161.70 C1296.67 168.30 1313.33 175.80 1330.00 183.30 C1346.67 190.80 1366.17 199.47 1380.00 206.70 C1393.83 213.93 1403.33 220.03 1413.00 226.70 C1422.67 233.37 1430.17 239.82 1438.00 246.70 C1445.83 253.58 1456.33 264.45 1460.00 268.00"/>
<path d="M1216.70 152.00 C1217.58 151.17 1219.78 148.38 1222.00 147.00 C1224.22 145.62 1228.67 144.25 1230.00 143.70"/>
</g>
<g fill="none" stroke="#4ec36b">
<path d="M685.00 108.30 L688.54 107.69 L691.96 107.13 L695.26 106.62 L698.45 106.16 L701.51 105.75 L704.45 105.40 L707.26 105.09 L709.95 104.84 L712.52 104.64 L714.96 104.49 L717.28 104.40 L719.48 104.37 L721.55 104.39 L723.51 104.46 L725.35 104.59 L727.07 104.77 L728.68 105.00 L730.18 105.29 L731.57 105.63 L732.86 106.03 L734.04 106.47 L735.13 106.97 L736.12 107.51 L737.01 108.10 L737.82 108.74 L738.55 109.43 L739.19 110.16 L739.76 110.93 L740.25 111.75 L740.67 112.61 L741.02 113.51 L741.32 114.45 L741.55 115.42 L741.72 116.44 L741.84 117.48 L741.92 118.57 L741.94 119.68 L741.92 120.83 L741.86 122.00 L741.76 123.21 L741.62 124.44 L741.45 125.71 L741.25 126.99 L741.02 128.31 L740.77 129.64 L740.49 131.01 L740.18 132.39 L739.86 133.79 L739.52 135.22 L739.16 136.66 L738.79 138.13 L738.40 139.61 L738.00 141.11 L737.59 142.63 L737.17 144.16 L736.75 145.71 L736.31 147.27 L735.88 148.85 L735.44 150.44 L734.99 152.04 L734.54 153.66 L734.10 155.29 L733.65 156.93 L733.20 158.59 L732.76 160.25 L732.31 161.93 L731.87 163.61 L731.44 165.30 L731.01 167.01 L730.58 168.72 L730.16 170.44 L729.75 172.17 L729.35 173.91 L728.95 175.65 L728.56 177.41 L728.18 179.17 L727.81 180.93 L727.45 182.71 L727.10 184.49 L726.76 186.27 L726.43 188.07 L726.12 189.86 L725.81 191.67 L725.52 193.48 L725.24 195.29 L724.97 197.11 L724.72 198.93 L724.48 200.76 L724.25 202.60 L724.04 204.43 L723.84 206.28 L723.66 208.12 L723.49 209.97 L723.34 211.83 L723.20 213.68 L723.08 215.54 L722.97 217.41 L722.88 219.28 L722.81 221.15 L722.75 223.02 L722.71 224.90 L722.68 226.78 L722.68 228.66 L722.68 230.54 L722.71 232.43 L722.75 234.32 L722.81 236.21 L722.89 238.11 L722.98 240.01 L723.10 241.90 L723.23 243.81 L723.37 245.71 L723.54 247.61 L723.72 249.52 L723.92 251.43 L724.14 253.34 L724.38 255.25 L724.64 257.17 L724.91 259.08 L725.20 261.00" stroke-width="1.389" stroke-dasharray="1.389 2.292"/>
<path d="M609.20 124.70 L685.00 108.30" stroke-width="1.389"/>
</g>
<g fill="none" stroke="#4ec36b">
<path d="M649.80 127.40 L652.83 126.96 L655.77 126.55 L658.63 126.18 L661.41 125.85 L664.11 125.56 L666.72 125.31 L669.24 125.10 L671.68 124.92 L674.04 124.79 L676.31 124.69 L678.50 124.64 L680.60 124.63 L682.63 124.65 L684.57 124.72 L686.43 124.82 L688.21 124.97 L689.92 125.15 L691.54 125.38 L693.10 125.64 L694.57 125.94 L695.98 126.28 L697.31 126.66 L698.58 127.08 L699.78 127.53 L700.91 128.02 L701.99 128.55 L703.00 129.11 L703.95 129.71 L704.84 130.34 L705.68 131.00 L706.46 131.70 L707.20 132.43 L707.88 133.19 L708.52 133.98 L709.11 134.81 L709.66 135.66 L710.17 136.54 L710.64 137.45 L711.07 138.39 L711.47 139.35 L711.83 140.34 L712.16 141.36 L712.47 142.40 L712.74 143.46 L712.98 144.55 L713.20 145.66 L713.40 146.80 L713.58 147.95 L713.73 149.13 L713.87 150.32 L713.99 151.54 L714.09 152.77 L714.17 154.03 L714.25 155.30 L714.31 156.58 L714.36 157.89 L714.40 159.21 L714.43 160.55 L714.45 161.90 L714.46 163.27 L714.47 164.65 L714.47 166.05 L714.47 167.46 L714.47 168.88 L714.46 170.32 L714.45 171.77 L714.44 173.23 L714.44 174.70 L714.43 176.18 L714.42 177.68 L714.41 179.18 L714.41 180.70 L714.41 182.22 L714.41 183.76 L714.42 185.30 L714.44 186.85 L714.45 188.41 L714.48 189.98 L714.51 191.56 L714.55 193.15 L714.59 194.74 L714.64 196.35 L714.71 197.95 L714.77 199.57 L714.85 201.19 L714.94 202.82 L715.04 204.46 L715.14 206.10 L715.26 207.75 L715.39 209.40 L715.53 211.06 L715.68 212.72 L715.84 214.40 L716.01 216.07 L716.20 217.75 L716.39 219.44 L716.60 221.13 L716.83 222.82 L717.06 224.52 L717.31 226.22 L717.57 227.93 L717.84 229.64 L718.13 231.36 L718.43 233.07 L718.75 234.80 L719.08 236.52 L719.42 238.25 L719.78 239.99 L720.15 241.72 L720.53 243.46 L720.93 245.20 L721.35 246.95 L721.78 248.70 L722.22 250.45 L722.68 252.20 L723.15 253.95 L723.64 255.71 L724.15 257.47 L724.67 259.24 L725.20 261.00" stroke-width="1.389" stroke-dasharray="1.389 2.292"/>
<path d="M579.00 142.00 L649.80 127.40" stroke-width="1.389"/>
</g>
<rect x="577.60" y="140.80" width="2.4" height="2.4" fill="#ff6040"/>
<g fill="none" stroke="#4ec36b">
<path d="M594.60 157.70 L597.28 157.35 L599.91 157.03 L602.49 156.73 L605.02 156.45 L607.50 156.21 L609.93 155.98 L612.32 155.79 L614.65 155.62 L616.93 155.48 L619.17 155.36 L621.36 155.28 L623.49 155.21 L625.58 155.18 L627.62 155.17 L629.61 155.19 L631.56 155.23 L633.46 155.31 L635.31 155.40 L637.11 155.53 L638.87 155.68 L640.58 155.86 L642.25 156.06 L643.88 156.30 L645.46 156.55 L647.00 156.84 L648.50 157.14 L649.96 157.48 L651.38 157.84 L652.76 158.22 L654.10 158.63 L655.40 159.07 L656.67 159.53 L657.90 160.01 L659.10 160.52 L660.26 161.05 L661.39 161.60 L662.49 162.18 L663.56 162.78 L664.60 163.40 L665.61 164.04 L666.60 164.71 L667.55 165.40 L668.49 166.11 L669.39 166.84 L670.27 167.59 L671.13 168.36 L671.97 169.15 L672.79 169.96 L673.59 170.78 L674.36 171.63 L675.12 172.50 L675.87 173.38 L676.59 174.28 L677.30 175.20 L678.00 176.14 L678.68 177.09 L679.35 178.06 L680.01 179.04 L680.65 180.05 L681.29 181.06 L681.91 182.09 L682.53 183.14 L683.14 184.20 L683.74 185.27 L684.33 186.36 L684.92 187.47 L685.50 188.58 L686.07 189.71 L686.64 190.85 L687.21 192.00 L687.78 193.17 L688.34 194.35 L688.90 195.54 L689.46 196.74 L690.02 197.95 L690.57 199.17 L691.13 200.40 L691.69 201.65 L692.25 202.90 L692.81 204.16 L693.37 205.43 L693.94 206.72 L694.50 208.01 L695.07 209.31 L695.65 210.62 L696.23 211.93 L696.81 213.26 L697.40 214.59 L697.99 215.93 L698.59 217.28 L699.19 218.64 L699.80 220.00 L700.42 221.37 L701.04 222.75 L701.67 224.13 L702.30 225.53 L702.95 226.92 L703.60 228.33 L704.26 229.74 L704.92 231.15 L705.60 232.57 L706.28 234.00 L706.97 235.43 L707.67 236.87 L708.38 238.32 L709.10 239.76 L709.83 241.22 L710.57 242.68 L711.31 244.14 L712.07 245.61 L712.84 247.08 L713.61 248.55 L714.40 250.03 L715.20 251.52 L716.01 253.01 L716.82 254.50 L717.65 255.99 L718.49 257.49 L719.34 258.99 L720.20 260.50" stroke-width="1.389" stroke-dasharray="1.389 2.292"/>
<path d="M543.00 167.00 L594.60 157.70" stroke-width="1.389"/>
</g>
<rect x="541.60" y="165.80" width="2.4" height="2.4" fill="#ff6040"/>
<g fill="none" stroke="#375a8c">
<path d="M747.00 122.50 L748.71 122.34 L750.39 122.20 L752.03 122.08 L753.65 121.99 L755.24 121.91 L756.80 121.86 L758.32 121.82 L759.82 121.81 L761.29 121.82 L762.73 121.85 L764.15 121.90 L765.53 121.97 L766.89 122.07 L768.22 122.18 L769.53 122.32 L770.80 122.47 L772.06 122.65 L773.28 122.85 L774.49 123.06 L775.66 123.30 L776.82 123.56 L777.95 123.84 L779.06 124.14 L780.14 124.45 L781.20 124.79 L782.25 125.15 L783.27 125.52 L784.27 125.92 L785.25 126.33 L786.22 126.76 L787.16 127.21 L788.09 127.68 L789.00 128.16 L789.89 128.66 L790.77 129.18 L791.63 129.72 L792.48 130.27 L793.31 130.84 L794.13 131.42 L794.94 132.02 L795.73 132.64 L796.51 133.27 L797.27 133.92 L798.03 134.58 L798.78 135.26 L799.51 135.95 L800.23 136.65 L800.95 137.37 L801.65 138.10 L802.35 138.84 L803.04 139.60 L803.72 140.37 L804.39 141.15 L805.06 141.94 L805.72 142.75 L806.37 143.56 L807.01 144.39 L807.65 145.23 L808.29 146.08 L808.92 146.94 L809.54 147.81 L810.16 148.69 L810.78 149.58 L811.39 150.48 L811.99 151.39 L812.60 152.31 L813.20 153.24 L813.80 154.18 L814.39 155.12 L814.98 156.08 L815.57 157.04 L816.16 158.01 L816.75 158.99 L817.33 159.98 L817.91 160.97 L818.50 161.97 L819.08 162.98 L819.65 164.00 L820.23 165.02 L820.81 166.05 L821.39 167.08 L821.96 168.12 L822.54 169.17 L823.11 170.23 L823.69 171.29 L824.26 172.35 L824.84 173.43 L825.41 174.50 L825.99 175.59 L826.57 176.68 L827.14 177.77 L827.72 178.87 L828.30 179.97 L828.88 181.08 L829.46 182.19 L830.04 183.31 L830.62 184.43 L831.20 185.56 L831.79 186.69 L832.37 187.83 L832.96 188.97 L833.55 190.11 L834.14 191.26 L834.73 192.41 L835.32 193.57 L835.91 194.73 L836.51 195.89 L837.11 197.06 L837.70 198.22 L838.30 199.40 L838.91 200.57 L839.51 201.75 L840.11 202.94 L840.72 204.12 L841.33 205.31 L841.94 206.50 L842.55 207.70 L843.17 208.90 L843.78 210.10 L844.40 211.30" stroke-width="1.389" stroke-dasharray="1.389 2.292"/>
<path d="M717.00 127.00 L747.00 122.50" stroke-width="1.389"/>
</g>
<rect x="715.60" y="125.80" width="2.4" height="2.4" fill="#ff6040"/>
<g fill="none" stroke="#808080" stroke-width="1.389">
<path d="M702.50 183.30 L764.70 162.00"/>
<path d="M752.00 116.30 L759.50 113.80"/>
<path d="M1007.50 66.70 L1230.00 143.70"/>
<path d="M1031.70 74.20 L1075.00 85.30"/>
<path d="M1213.00 161.70 L1216.70 152.00"/>
</g>
<rect x="1197.2" y="125.0" width="1.6" height="1.6" fill="#4ec36b"/><rect x="1198.6" y="125.0" width="2.0" height="2.0" fill="#ff6040"/>
<path d="M704.32 262.90 L704.73 261.64 L705.21 260.38 L705.77 259.13 L706.39 257.88 L707.09 256.64 L707.85 255.42 L708.68 254.22 L709.57 253.03 L710.52 251.88 L711.52 250.75 L712.58 249.65 L713.68 248.58 L714.83 247.55 L716.02 246.57 L717.25 245.62 L718.51 244.73 L719.80 243.88 L721.11 243.08 L722.44 242.34 L723.79 241.65 L725.15 241.03 L726.52 240.46 L727.89 239.95 L729.26 239.51 L730.62 239.14 L731.97 238.83 L733.31 238.59 L734.63 238.41 L735.93 238.31 L737.20 238.28 L738.45 238.31 L739.66 238.41 L740.84 238.59 L741.98 238.83 L743.08 239.14 L744.13 239.51 L745.14 239.95 L746.10 240.46 L747.01 241.03 L747.87 241.65 L748.67 242.34 L749.42 243.08 L750.11 243.88 L750.75 244.73 L751.32 245.62 L751.84 246.57 L752.29 247.55 L752.69 248.58 L753.02 249.65 L753.29 250.75 L753.49 251.88 L753.64 253.03 L753.72 254.22 L753.74 255.42 L753.70 256.64 L753.60 257.88 L753.43 259.13 L753.21 260.38 L752.93 261.64 L752.58 262.90 L752.18 264.16 L751.73 265.41 L751.21 266.65 L750.64 267.88 L750.02 269.09 L749.35 270.28 L748.63 271.45 L747.86 272.60 L747.04 273.72 L746.17 274.80 L745.27 275.86 L744.32 276.87 L743.33 277.85 L742.30 278.79 L741.24 279.68 L740.15 280.52 L739.02 281.32 L737.87 282.07 L736.70 282.76 L735.50 283.40 L734.28 283.98 L733.04 284.51 L731.79 284.98 L730.52 285.38 L729.25 285.73 L727.98 286.01 L726.70 286.24 L725.42 286.40 L724.15 286.49 L722.88 286.52 L721.63 286.49 L720.39 286.40 L719.17 286.24 L717.97 286.01 L716.80 285.73 L715.65 285.38 L714.54 284.98 L713.46 284.51 L712.42 283.98 L711.42 283.40 L710.47 282.76 L709.56 282.07 L708.71 281.32 L707.91 280.52 L707.17 279.68 L706.49 278.79 L705.87 277.85 L705.32 276.87 L704.83 275.86 L704.41 274.80 L704.07 273.72 L703.79 272.60 L703.59 271.45 L703.47 270.28 L703.42 269.09 L703.45 267.88 L703.55 266.65 L703.73 265.41 L703.99 264.16Z" fill="none" stroke="#4ec36b" stroke-width="2.083"/>
<path d="M817.54 213.41 L817.83 212.16 L818.20 210.90 L818.63 209.64 L819.13 208.38 L819.70 207.14 L820.33 205.91 L821.03 204.69 L821.78 203.49 L822.60 202.31 L823.46 201.16 L824.39 200.04 L825.36 198.95 L826.38 197.89 L827.44 196.88 L828.54 195.91 L829.68 194.98 L830.85 194.11 L832.06 193.28 L833.29 192.51 L834.54 191.80 L835.81 191.15 L837.09 190.56 L838.39 190.03 L839.69 189.57 L841.00 189.18 L842.30 188.85 L843.60 188.60 L844.90 188.42 L846.18 188.31 L847.45 188.28 L848.70 188.31 L849.93 188.42 L851.13 188.60 L852.31 188.85 L853.45 189.18 L854.57 189.57 L855.64 190.03 L856.68 190.56 L857.67 191.15 L858.62 191.80 L859.53 192.51 L860.38 193.28 L861.19 194.11 L861.94 194.98 L862.64 195.91 L863.28 196.88 L863.87 197.89 L864.40 198.95 L864.86 200.04 L865.27 201.16 L865.61 202.31 L865.89 203.49 L866.11 204.69 L866.26 205.91 L866.35 207.14 L866.38 208.38 L866.34 209.64 L866.24 210.90 L866.07 212.16 L865.84 213.41 L865.55 214.66 L865.19 215.91 L864.78 217.14 L864.30 218.36 L863.76 219.55 L863.17 220.73 L862.52 221.88 L861.82 223.01 L861.06 224.10 L860.25 225.17 L859.40 226.20 L858.50 227.19 L857.55 228.14 L856.56 229.05 L855.53 229.92 L854.47 230.74 L853.37 231.51 L852.24 232.23 L851.08 232.90 L849.90 233.52 L848.69 234.08 L847.47 234.59 L846.23 235.04 L844.97 235.43 L843.71 235.76 L842.44 236.03 L841.16 236.25 L839.89 236.40 L838.62 236.49 L837.35 236.52 L836.10 236.49 L834.86 236.40 L833.63 236.25 L832.43 236.03 L831.25 235.76 L830.10 235.43 L828.98 235.04 L827.89 234.59 L826.84 234.08 L825.82 233.52 L824.85 232.90 L823.93 232.23 L823.05 231.51 L822.22 230.74 L821.45 229.92 L820.74 229.05 L820.08 228.14 L819.48 227.19 L818.94 226.20 L818.47 225.17 L818.07 224.10 L817.73 223.01 L817.46 221.88 L817.25 220.73 L817.12 219.55 L817.06 218.36 L817.07 217.14 L817.16 215.91 L817.31 214.66Z" fill="none" stroke="#375a8c" stroke-width="2.083"/>
<g font-family="'DejaVu Sans','Liberation Sans',sans-serif" font-size="11.11" fill="#ffffff" text-anchor="middle">
<text transform="translate(729.0 266.3) scale(0.97 1)">STA</text>
<text transform="translate(841.6 216.2) scale(0.97 1)">AND</text>
</g>
<g stroke="#ff0000" stroke-width="1.3" fill="none">
<path d="M721.0 266.8 H727.6 M724.3 263.5 V270.1"/>
<path d="M722.7 265.6 H729.3 M726.0 262.3 V268.9"/>
<path d="M724.1 264.4 H730.7 M727.4 261.1 V267.7"/>
<path d="M841.4 211.4 H848.0 M844.7 208.1 V214.7"/>
</g>
<clipPath id="axclip"><rect x="19.5" y="641.5" width="1766.0" height="201.0"/></clipPath>
<g clip-path="url(#axclip)">
<g fill="none" stroke="#ffffff" stroke-opacity="0.3" stroke-width="2.083" stroke-dasharray="2.083 3.437">
<path d="M74.00 841.80 V641.50"/>
<path d="M218.00 841.80 V641.50"/>
<path d="M365.00 841.80 V641.50"/>
<path d="M505.00 841.80 V641.50"/>
<path d="M649.90 841.80 V641.50"/>
<path d="M796.80 841.80 V641.50"/>
<path d="M939.90 841.80 V641.50"/>
<path d="M1090.80 841.80 V641.50"/>
<path d="M1238.90 841.80 V641.50"/>
<path d="M1394.00 841.80 V641.50"/>
<path d="M1548.00 841.80 V641.50"/>
<path d="M1687.00 841.80 V641.50"/>
</g>
<g font-family="'DejaVu Sans','Liberation Sans',sans-serif" font-size="27.78" fill="#ffffff" fill-opacity="0.3" text-anchor="end">
<text transform="translate(149.20 643.20) rotate(-90) scale(0.97 1)">APR</text>
<text transform="translate(293.80 645.70) rotate(-90) scale(0.97 1)">MAY</text>
<text transform="translate(435.80 640.80) rotate(-90) scale(0.97 1)">JUN</text>
<text transform="translate(575.80 640.20) rotate(-90) scale(0.97 1)">JUL</text>
<text transform="translate(723.10 643.00) rotate(-90) scale(0.97 1)">AUG</text>
<text transform="translate(871.50 644.00) rotate(-90) scale(0.97 1)">SEP</text>
<text transform="translate(1016.50 643.90) rotate(-90) scale(0.97 1)">OCT</text>
<text transform="translate(1168.90 645.40) rotate(-90) scale(0.97 1)">NOV</text>
<text transform="translate(1318.20 644.20) rotate(-90) scale(0.97 1)">DEC</text>
<text transform="translate(1469.70 640.30) rotate(-90) scale(0.97 1)">JAN</text>
<text transform="translate(1628.60 645.70) rotate(-90) scale(0.97 1)">FEB</text>
<text transform="translate(1766.10 646.30) rotate(-90) scale(0.97 1)">MAR</text>
</g>
<g stroke="#ff0000" stroke-width="1.389" fill="none" stroke-dasharray="5.139 2.222">
<path d="M1133.50 842.5 V641.5"/>
<path d="M1136.55 842.5 V641.5"/>
</g>
<g fill="#bddf26">
<rect x="105.4" y="832" width="24.2" height="4"/>
<rect x="164.4" y="832" width="181.2" height="4"/>
<rect x="365.4" y="832" width="259.2" height="4"/>
<rect x="635.4" y="832" width="151.2" height="4"/>
<rect x="807.4" y="832" width="92.2" height="4"/>
<rect x="920.4" y="832" width="53.2" height="4"/>
<rect x="983.4" y="832" width="83.2" height="4"/>
<rect x="1082.4" y="832" width="121.2" height="4"/>
<rect x="1243.4" y="832" width="83.2" height="4"/>
<rect x="1337.4" y="832" width="18.2" height="4"/>
<rect x="1381.4" y="832" width="63.2" height="4"/>
<rect x="1459.4" y="832" width="53.2" height="4"/>
<rect x="1523.4" y="832" width="24.2" height="4"/>
<rect x="1724.4" y="832" width="24.2" height="4"/>
<rect x="1758.4" y="832" width="24.2" height="4"/>
</g>
<g fill="#81d34d">
<rect x="164.4" y="816" width="24.2" height="4"/>
<rect x="223.4" y="816" width="63.2" height="4"/>
<rect x="311.4" y="816" width="29.2" height="4"/>
<rect x="365.4" y="816" width="127.2" height="4"/>
<rect x="508.4" y="816" width="146.2" height="4"/>
<rect x="704.4" y="816" width="33.2" height="4"/>
<rect x="772.4" y="816" width="73.2" height="4"/>
<rect x="871.4" y="816" width="116.2" height="4"/>
<rect x="1003.4" y="816" width="14.2" height="4"/>
<rect x="1062.4" y="816" width="151.2" height="4"/>
<rect x="1243.4" y="816" width="24.2" height="4"/>
<rect x="1292.4" y="816" width="24.2" height="4"/>
<rect x="1342.4" y="816" width="23.2" height="4"/>
<rect x="1386.4" y="816" width="43.2" height="4"/>
<rect x="1459.4" y="816" width="24.2" height="4"/>
<rect x="1548.4" y="816" width="23.2" height="4"/>
</g>
<g fill="#4ec36b">
<rect x="164.4" y="800" width="24.2" height="4"/>
<rect x="257.4" y="800" width="230.2" height="4"/>
<rect x="508.4" y="800" width="107.2" height="4"/>
<rect x="625.4" y="800" width="93.2" height="4"/>
<rect x="728.4" y="800" width="98.2" height="4"/>
<rect x="949.4" y="800" width="200.2" height="4"/>
<rect x="1160.4" y="800" width="87.2" height="4"/>
<rect x="1258.4" y="800" width="186.2" height="4"/>
<rect x="1459.4" y="800" width="24.2" height="4"/>
<rect x="1552.4" y="800" width="24.2" height="4"/>
</g>
<g fill="#2ab07f">
<rect x="194.4" y="783" width="23.2" height="4"/>
<rect x="321.4" y="783" width="186.2" height="4"/>
<rect x="517.4" y="783" width="24.2" height="4"/>
<rect x="557.4" y="783" width="126.2" height="4"/>
<rect x="807.4" y="783" width="23.2" height="4"/>
<rect x="954.4" y="783" width="19.2" height="4"/>
<rect x="988.4" y="783" width="137.2" height="4"/>
<rect x="1155.4" y="783" width="63.2" height="4"/>
<rect x="1243.4" y="783" width="24.2" height="4"/>
<rect x="1317.4" y="783" width="24.2" height="4"/>
<rect x="1395.4" y="783" width="24.2" height="4"/>
<rect x="1464.4" y="783" width="186.2" height="4"/>
</g>
<g fill="#1e9b8a">
<rect x="341.4" y="767" width="28.2" height="4"/>
<rect x="409.4" y="767" width="39.2" height="4"/>
<rect x="468.4" y="767" width="24.2" height="4"/>
<rect x="527.4" y="767" width="19.2" height="4"/>
<rect x="562.4" y="767" width="28.2" height="4"/>
<rect x="615.4" y="767" width="34.2" height="4"/>
<rect x="959.4" y="767" width="28.2" height="4"/>
<rect x="1062.4" y="767" width="24.2" height="4"/>
<rect x="1101.4" y="767" width="24.2" height="4"/>
<rect x="1160.4" y="767" width="33.2" height="4"/>
<rect x="1248.4" y="767" width="24.2" height="4"/>
<rect x="1425.4" y="767" width="87.2" height="4"/>
</g>
<g fill="#25858e">
<rect x="419.4" y="750" width="24.2" height="4"/>
<rect x="532.4" y="750" width="24.2" height="4"/>
<rect x="566.4" y="750" width="24.2" height="4"/>
<rect x="620.4" y="750" width="122.2" height="4"/>
<rect x="969.4" y="750" width="166.2" height="4"/>
<rect x="1185.4" y="750" width="161.2" height="4"/>
<rect x="1469.4" y="750" width="24.2" height="4"/>
</g>
<g fill="#2d708e">
<rect x="429.4" y="734" width="24.2" height="4"/>
<rect x="576.4" y="734" width="156.2" height="4"/>
<rect x="993.4" y="734" width="112.2" height="4"/>
<rect x="1116.4" y="734" width="107.2" height="4"/>
<rect x="1263.4" y="734" width="29.2" height="4"/>
<rect x="1489.4" y="734" width="23.2" height="4"/>
</g>
<g fill="#375a8c">
<rect x="591.4" y="718" width="24.2" height="4"/>
<rect x="655.4" y="718" width="117.2" height="4"/>
<rect x="1072.4" y="718" width="170.2" height="4"/>
<rect x="1263.4" y="718" width="24.2" height="4"/>
</g>
<g fill="#424086">
<rect x="596.4" y="701" width="136.2" height="4"/>
<rect x="1091.4" y="701" width="29.2" height="4"/>
<rect x="1199.4" y="701" width="24.2" height="4"/>
<rect x="1273.4" y="701" width="53.2" height="4"/>
</g>
<g fill="#482475">
<rect x="1111.4" y="685" width="24.2" height="4"/>
</g>
<g stroke="#ffffff" stroke-width="2.1" fill="none">
<path d="M112.6 834 H120.8 M116.7 830 V838"/>
<path d="M240.5 834 H248.7 M244.6 830 V838"/>
<path d="M510.7 834 H518.9 M514.8 830 V838"/>
<path d="M706.8 834 H715.0 M710.9 830 V838"/>
<path d="M832.6 834 H840.8 M836.7 830 V838"/>
<path d="M961.6 834 H969.8 M965.7 830 V838"/>
<path d="M985.6 834 H993.8 M989.7 830 V838"/>
<path d="M1115.6 834 H1123.8 M1119.7 830 V838"/>
<path d="M1294.7 834 H1302.9 M1298.8 830 V838"/>
<path d="M1341.7 834 H1349.9 M1345.8 830 V838"/>
<path d="M1412.7 834 H1420.9 M1416.8 830 V838"/>
<path d="M1481.8 834 H1490.0 M1485.9 830 V838"/>
<path d="M1530.9 834 H1539.1 M1535.0 830 V838"/>
<path d="M1731.9 834 H1740.1 M1736.0 830 V838"/>
<path d="M1765.7 834 H1773.9 M1769.8 830 V838"/>
<path d="M171.6 818 H179.8 M175.7 814 V822"/>
<path d="M255.6 818 H263.8 M259.7 814 V822"/>
<path d="M322.7 818 H330.9 M326.8 814 V822"/>
<path d="M436.6 818 H444.8 M440.7 814 V822"/>
<path d="M598.7 818 H606.9 M602.8 814 V822"/>
<path d="M716.8 818 H725.0 M720.9 814 V822"/>
<path d="M792.7 818 H800.9 M796.8 814 V822"/>
<path d="M938.8 818 H947.0 M942.9 814 V822"/>
<path d="M1005.8 818 H1014.0 M1009.9 814 V822"/>
<path d="M1152.8 818 H1161.0 M1156.9 814 V822"/>
<path d="M1250.7 818 H1258.9 M1254.8 814 V822"/>
<path d="M1299.8 818 H1308.0 M1303.9 814 V822"/>
<path d="M1348.9 818 H1357.1 M1353.0 814 V822"/>
<path d="M1402.7 818 H1410.9 M1406.8 814 V822"/>
<path d="M1466.8 818 H1475.0 M1470.9 814 V822"/>
<path d="M1554.9 818 H1563.1 M1559.0 814 V822"/>
<path d="M173.5 802 H181.7 M177.6 798 V806"/>
<path d="M377.7 802 H385.9 M381.8 798 V806"/>
<path d="M544.9 802 H553.1 M549.0 798 V806"/>
<path d="M681.8 802 H690.0 M685.9 798 V806"/>
<path d="M740.8 802 H749.0 M744.9 798 V806"/>
<path d="M1074.8 802 H1083.0 M1078.9 798 V806"/>
<path d="M1216.7 802 H1224.9 M1220.8 798 V806"/>
<path d="M1304.7 802 H1312.9 M1308.8 798 V806"/>
<path d="M1466.8 802 H1475.0 M1470.9 798 V806"/>
<path d="M1559.8 802 H1568.0 M1563.9 798 V806"/>
<path d="M201.8 785 H210.0 M205.9 781 V789"/>
<path d="M399.8 785 H408.0 M403.9 781 V789"/>
<path d="M524.8 785 H533.0 M528.9 781 V789"/>
<path d="M638.8 785 H647.0 M642.9 781 V789"/>
<path d="M814.6 785 H822.8 M818.7 781 V789"/>
<path d="M958.8 785 H967.0 M962.9 781 V789"/>
<path d="M1039.8 785 H1048.0 M1043.9 781 V789"/>
<path d="M1187.7 785 H1195.9 M1191.8 781 V789"/>
<path d="M1250.7 785 H1258.9 M1254.8 781 V789"/>
<path d="M1324.7 785 H1332.9 M1328.8 781 V789"/>
<path d="M1402.7 785 H1410.9 M1406.8 781 V789"/>
<path d="M1545.8 785 H1554.0 M1549.9 781 V789"/>
<path d="M355.8 769 H364.0 M359.9 765 V773"/>
<path d="M425.9 769 H434.1 M430.0 765 V773"/>
<path d="M475.5 769 H483.7 M479.6 765 V773"/>
<path d="M534.7 769 H542.9 M538.8 765 V773"/>
<path d="M570.7 769 H578.9 M574.8 765 V773"/>
<path d="M630.7 769 H638.9 M634.8 765 V773"/>
<path d="M973.7 769 H981.9 M977.8 765 V773"/>
<path d="M1069.7 769 H1077.9 M1073.8 765 V773"/>
<path d="M1108.8 769 H1117.0 M1112.9 765 V773"/>
<path d="M1177.7 769 H1185.9 M1181.8 765 V773"/>
<path d="M1255.8 769 H1264.0 M1259.9 765 V773"/>
<path d="M1466.8 769 H1475.0 M1470.9 765 V773"/>
<path d="M426.8 752 H435.0 M430.9 748 V756"/>
<path d="M539.6 752 H547.8 M543.7 748 V756"/>
<path d="M573.6 752 H581.8 M577.7 748 V756"/>
<path d="M703.6 752 H711.8 M707.7 748 V756"/>
<path d="M1093.7 752 H1101.9 M1097.8 748 V756"/>
<path d="M1270.9 752 H1279.1 M1275.0 748 V756"/>
<path d="M1476.8 752 H1485.0 M1480.9 748 V756"/>
<path d="M436.6 736 H444.8 M440.7 732 V740"/>
<path d="M630.7 736 H638.9 M634.8 732 V740"/>
<path d="M1038.9 736 H1047.1 M1043.0 732 V740"/>
<path d="M1167.7 736 H1175.9 M1171.8 732 V740"/>
<path d="M1274.9 736 H1283.1 M1279.0 732 V740"/>
<path d="M1496.8 736 H1505.0 M1500.9 732 V740"/>
<path d="M598.7 720 H606.9 M602.8 716 V724"/>
<path d="M726.8 720 H735.0 M730.9 716 V724"/>
<path d="M1187.7 720 H1195.9 M1191.8 716 V724"/>
<path d="M1270.9 720 H1279.1 M1275.0 716 V724"/>
<path d="M686.8 703 H695.0 M690.9 699 V707"/>
<path d="M1101.8 703 H1110.0 M1105.9 699 V707"/>
<path d="M1206.8 703 H1215.0 M1210.9 699 V707"/>
<path d="M1299.8 703 H1308.0 M1303.9 699 V707"/>
<path d="M1118.8 687 H1127.0 M1122.9 683 V691"/>
</g>
<g font-family="'DejaVu Sans','Liberation Sans',sans-serif" font-size="11.11" fill="#ffffff" text-anchor="middle">
<text transform="translate(117.9 831.6) scale(0.97 1)">KSE</text>
<text transform="translate(255.3 831.6) scale(0.97 1)">ETA</text>
<text transform="translate(495.6 831.6) scale(0.97 1)">NZC</text>
<text transform="translate(711.5 831.6) scale(0.97 1)">NDA</text>
<text transform="translate(853.7 831.6) scale(0.97 1)">SPE</text>
<text transform="translate(947.0 831.6) scale(0.97 1)">ARD</text>
<text transform="translate(1025.4 831.6) scale(0.97 1)">EGE</text>
<text transform="translate(1143.2 831.6) scale(0.97 1)">NTA</text>
<text transform="translate(1285.4 831.6) scale(0.97 1)">MON</text>
<text transform="translate(1344.3 831.6) scale(0.97 1)">URS</text>
<text transform="translate(1413.0 831.6) scale(0.97 1)">AHY</text>
<text transform="translate(1486.6 831.6) scale(0.97 1)">GUM</text>
<text transform="translate(1535.6 831.6) scale(0.97 1)">OHY</text>
<text transform="translate(1736.7 831.6) scale(0.97 1)">XHE</text>
<text transform="translate(1771.1 831.6) scale(0.97 1)">EVI</text>
<text transform="translate(176.8 815.2) scale(0.97 1)">AVB</text>
<text transform="translate(255.3 815.2) scale(0.97 1)">ELY</text>
<text transform="translate(323.9 815.2) scale(0.97 1)">CAM</text>
<text transform="translate(431.9 815.2) scale(0.97 1)">SSG</text>
<text transform="translate(579.0 815.2) scale(0.97 1)">PCA</text>
<text transform="translate(721.3 815.2) scale(0.97 1)">AUD</text>
<text transform="translate(809.6 815.2) scale(0.97 1)">AUR</text>
<text transform="translate(932.2 815.2) scale(0.97 1)">DSX</text>
<text transform="translate(1010.7 815.2) scale(0.97 1)">OCU</text>
<text transform="translate(1138.3 815.2) scale(0.97 1)">OER</text>
<text transform="translate(1256.0 815.2) scale(0.97 1)">DKD</text>
<text transform="translate(1305.1 815.2) scale(0.97 1)">DSV</text>
<text transform="translate(1354.1 815.2) scale(0.97 1)">ALY</text>
<text transform="translate(1408.1 815.2) scale(0.97 1)">JLE</text>
<text transform="translate(1471.8 815.2) scale(0.97 1)">SCC</text>
<text transform="translate(1560.1 815.2) scale(0.97 1)">FEV</text>
<text transform="translate(176.8 798.9) scale(0.97 1)">LYR</text>
<text transform="translate(373.0 798.9) scale(0.97 1)">JMC</text>
<text transform="translate(559.4 798.9) scale(0.97 1)">JPE</text>
<text transform="translate(672.2 798.9) scale(0.97 1)">PAU</text>
<text transform="translate(775.3 798.9) scale(0.97 1)">NIA</text>
<text transform="translate(1050.0 798.9) scale(0.97 1)">STA</text>
<text transform="translate(1206.9 798.9) scale(0.97 1)">NOO</text>
<text transform="translate(1354.1 798.9) scale(0.97 1)">COM</text>
<text transform="translate(1471.8 798.9) scale(0.97 1)">NCC</text>
<text transform="translate(1565.0 798.9) scale(0.97 1)">FED</text>
<text transform="translate(206.2 782.5) scale(0.97 1)">HVI</text>
<text transform="translate(412.2 782.5) scale(0.97 1)">ARI</text>
<text transform="translate(530.0 782.5) scale(0.97 1)">SZC</text>
<text transform="translate(618.3 782.5) scale(0.97 1)">CAP</text>
<text transform="translate(819.4 782.5) scale(0.97 1)">NUE</text>
<text transform="translate(961.7 782.5) scale(0.97 1)">OCT</text>
<text transform="translate(1059.8 782.5) scale(0.97 1)">ORI</text>
<text transform="translate(1187.3 782.5) scale(0.97 1)">AMO</text>
<text transform="translate(1256.0 782.5) scale(0.97 1)">DPC</text>
<text transform="translate(1329.6 782.5) scale(0.97 1)">XVI</text>
<text transform="translate(1408.1 782.5) scale(0.97 1)">QUA</text>
<text transform="translate(1560.1 782.5) scale(0.97 1)">AAN</text>
<text transform="translate(353.4 766.1) scale(0.97 1)">TAH</text>
<text transform="translate(431.9 766.1) scale(0.97 1)">JEA</text>
<text transform="translate(480.9 766.1) scale(0.97 1)">JIP</text>
<text transform="translate(539.8 766.1) scale(0.97 1)">PPS</text>
<text transform="translate(579.0 766.1) scale(0.97 1)">ZCS</text>
<text transform="translate(633.0 766.1) scale(0.97 1)">GDR</text>
<text transform="translate(971.5 766.1) scale(0.97 1)">DRA</text>
<text transform="translate(1074.5 766.1) scale(0.97 1)">LUM</text>
<text transform="translate(1113.7 766.1) scale(0.97 1)">RPU</text>
<text transform="translate(1177.5 766.1) scale(0.97 1)">THA</text>
<text transform="translate(1260.9 766.1) scale(0.97 1)">PSU</text>
<text transform="translate(1471.8 766.1) scale(0.97 1)">XCB</text>
<text transform="translate(431.9 749.8) scale(0.97 1)">JRC</text>
<text transform="translate(544.7 749.8) scale(0.97 1)">CAN</text>
<text transform="translate(579.0 749.8) scale(0.97 1)">FAN</text>
<text transform="translate(682.0 749.8) scale(0.97 1)">PER</text>
<text transform="translate(1050.0 749.8) scale(0.97 1)">CTA</text>
<text transform="translate(1265.8 749.8) scale(0.97 1)">HYD</text>
<text transform="translate(1481.7 749.8) scale(0.97 1)">XUM</text>
<text transform="translate(441.7 733.4) scale(0.97 1)">COR</text>
<text transform="translate(657.5 733.4) scale(0.97 1)">SDA</text>
<text transform="translate(1050.0 733.4) scale(0.97 1)">LMI</text>
<text transform="translate(1167.7 733.4) scale(0.97 1)">LEO</text>
<text transform="translate(1275.6 733.4) scale(0.97 1)">EHY</text>
<text transform="translate(1501.3 733.4) scale(0.97 1)">ECV</text>
<text transform="translate(603.6 717.0) scale(0.97 1)">JXA</text>
<text transform="translate(716.4 717.0) scale(0.97 1)">KCG</text>
<text transform="translate(1157.9 717.0) scale(0.97 1)">AND</text>
<text transform="translate(1275.6 717.0) scale(0.97 1)">DAD</text>
<text transform="translate(667.3 700.6) scale(0.97 1)">ERI</text>
<text transform="translate(1108.8 700.6) scale(0.97 1)">SLD</text>
<text transform="translate(1211.9 700.6) scale(0.97 1)">ORS</text>
<text transform="translate(1300.2 700.6) scale(0.97 1)">GEM</text>
<text transform="translate(1123.5 684.3) scale(0.97 1)">KUM</text>
</g>
</g>
<rect x="19.5" y="641.5" width="1766.0" height="201.0" fill="none" stroke="#ffffff" stroke-width="1.1"/>
<g stroke="#ffffff" stroke-width="1.1">
<path d="M19.50 842.5 v4.9"/>
<path d="M264.78 842.5 v4.9"/>
<path d="M510.06 842.5 v4.9"/>
<path d="M755.33 842.5 v4.9"/>
<path d="M1000.61 842.5 v4.9"/>
<path d="M1245.89 842.5 v4.9"/>
<path d="M1491.17 842.5 v4.9"/>
<path d="M1736.44 842.5 v4.9"/>
</g>
<g font-family="'DejaVu Sans','Liberation Sans',sans-serif" font-size="13.89" fill="#ffffff" text-anchor="middle">
<text transform="translate(19.10 861.9) scale(0.95 1)">0</text>
<text transform="translate(264.38 861.9) scale(0.95 1)">50</text>
<text transform="translate(509.66 861.9) scale(0.95 1)">100</text>
<text transform="translate(754.93 861.9) scale(0.95 1)">150</text>
<text transform="translate(1000.21 861.9) scale(0.95 1)">200</text>
<text transform="translate(1245.49 861.9) scale(0.95 1)">250</text>
<text transform="translate(1490.77 861.9) scale(0.95 1)">300</text>
<text transform="translate(1736.04 861.9) scale(0.95 1)">350</text>
<text x="902.50" y="881.6">Solar longitude (deg)</text>
</g>
</svg>
</body></html>
